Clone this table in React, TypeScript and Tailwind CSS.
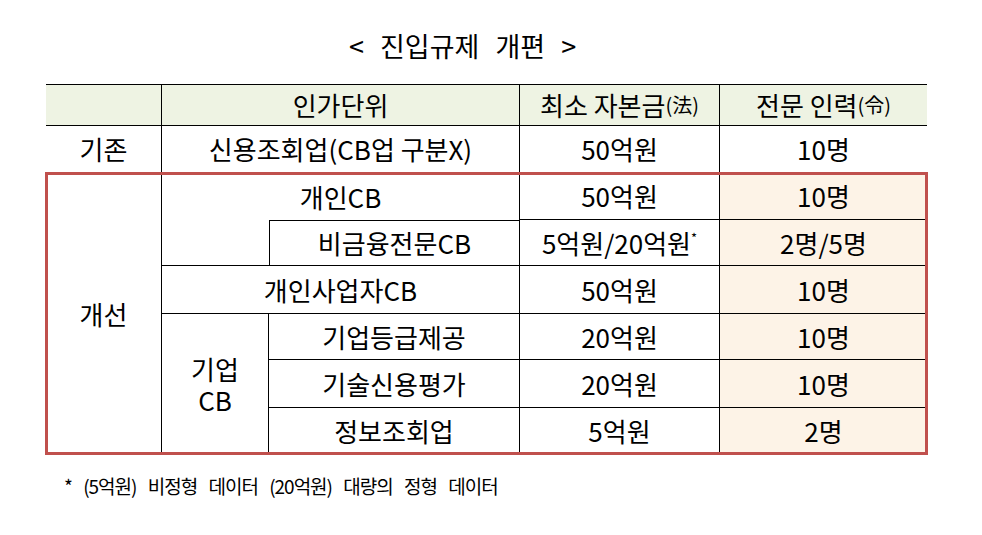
const font = { fontFamily: '"Noto Sans CJK KR", "Noto Sans", sans-serif' };

const base = "flex items-center justify-center border-black text-[26px] leading-none text-black";

export default function App() {
  return (
    <div className="w-[982px] h-[535px] bg-white" style={font}>
      <div className="pt-[29px] pl-[349px] text-[27px] leading-[34px] [word-spacing:10px] text-black">
        &lt; 진입규제 개편 &gt;
      </div>

      <div className="mt-[21px] ml-[46px] w-[881px] grid grid-cols-[116px_107px_251px_200px_207px] grid-rows-[41px_47px_47px_46px_48px_46px_48px_46px] border-t border-black">
        {/* header */}
        <div className={`${base} col-start-1 row-start-1 border-r border-b bg-[#EEF3E3]`} />
        <div className={`${base} col-start-2 col-span-2 row-start-1 border-r border-b bg-[#EEF3E3]`}>인가단위</div>
        <div className={`${base} col-start-4 row-start-1 border-r border-b bg-[#EEF3E3]`}>
          최소 자본금<span className="text-[20px]">(法)</span>
        </div>
        <div className={`${base} col-start-5 row-start-1 border-b bg-[#EEF3E3]`}>
          전문 인력<span className="text-[20px]">(令)</span>
        </div>

        {/* 기존 */}
        <div className={`${base} col-start-1 row-start-2 border-r border-b`}>기존</div>
        <div className={`${base} col-start-2 col-span-2 row-start-2 border-r border-b`}>신용조회업(CB업 구분X)</div>
        <div className={`${base} col-start-4 row-start-2 border-r border-b`}>50억원</div>
        <div className={`${base} col-start-5 row-start-2 border-b`}>10명</div>

        {/* 개선 */}
        <div className={`${base} col-start-1 row-start-3 row-span-6 border-r`}>개선</div>

        <div className={`${base} col-start-2 col-span-2 row-start-3 border-r`}>개인CB</div>
        <div className={`${base} col-start-4 row-start-3 border-r border-b`}>50억원</div>
        <div className={`${base} col-start-5 row-start-3 border-b bg-[#FDF3E7]`}>10명</div>

        <div className={`${base} col-start-2 row-start-4 border-b`} />
        <div className={`${base} col-start-3 row-start-4 border-t border-l border-r border-b`}>비금융전문CB</div>
        <div className={`${base} col-start-4 row-start-4 border-r border-b`}>
          5억원/20억원<span className="self-start mt-[11px] text-[13px] leading-none">*</span>
        </div>
        <div className={`${base} col-start-5 row-start-4 border-b bg-[#FDF3E7]`}>2명/5명</div>

        <div className={`${base} col-start-2 col-span-2 row-start-5 border-r border-b`}>개인사업자CB</div>
        <div className={`${base} col-start-4 row-start-5 border-r border-b`}>50억원</div>
        <div className={`${base} col-start-5 row-start-5 border-b bg-[#FDF3E7]`}>10명</div>

        <div className={`${base} col-start-2 row-start-6 row-span-3 border-r flex-col`}>
          <span className="leading-[31px]">기업</span>
          <span className="leading-[31px]">CB</span>
        </div>
        <div className={`${base} col-start-3 row-start-6 border-r border-b`}>기업등급제공</div>
        <div className={`${base} col-start-4 row-start-6 border-r border-b`}>20억원</div>
        <div className={`${base} col-start-5 row-start-6 border-b bg-[#FDF3E7]`}>10명</div>

        <div className={`${base} col-start-3 row-start-7 border-r border-b`}>기술신용평가</div>
        <div className={`${base} col-start-4 row-start-7 border-r border-b`}>20억원</div>
        <div className={`${base} col-start-5 row-start-7 border-b bg-[#FDF3E7]`}>10명</div>

        <div className={`${base} col-start-3 row-start-8 border-r`}>정보조회업</div>
        <div className={`${base} col-start-4 row-start-8 border-r`}>5억원</div>
        <div className={`${base} col-start-5 row-start-8 bg-[#FDF3E7]`}>2명</div>

        {/* red frame */}
        <div className="col-start-1 col-span-5 row-start-3 row-span-6 -ml-px -mr-px -mt-px -mb-px border-[3px] border-[#C0504D] z-10 pointer-events-none" />
      </div>

      <div className="mt-[19px] pl-[64px] text-[19px] leading-[26px] tracking-[-1px] [word-spacing:8px] text-black">
        * (5억원) 비정형 데이터 (20억원) 대량의 정형 데이터
      </div>
    </div>
  );
}
